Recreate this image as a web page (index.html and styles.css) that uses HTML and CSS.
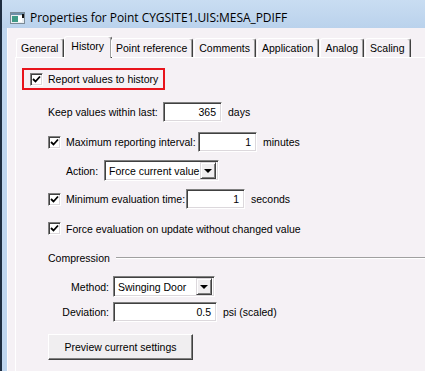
FILE: index.html
```html
<!DOCTYPE html>
<html lang="en">
<head>
  <meta charset="UTF-8" />
  <title>Properties for Point</title>
  <link rel="stylesheet" href="styles.css">
</head>
<body>

  <div class="window">
    <div class="titlebar">
      <svg class="app-icon" width="15" height="12" viewBox="0 0 15 12">
        <rect x="0.5" y="0.5" width="14" height="11" fill="#e8eef2" stroke="#7a8a96"/>
        <rect x="1" y="1" width="13" height="2" fill="#6f8fa8"/>
        <rect x="2" y="4" width="6" height="6" fill="#3f9a86"/>
        <rect x="8" y="4" width="4" height="6" fill="#ffffff"/>
        <rect x="12" y="2" width="2" height="4" fill="#111"/>
      </svg>
      <span class="title">Properties for Point CYGSITE1.UIS:MESA_PDIFF</span>
    </div>

    <div class="frame">
      <div class="client">

        <div class="tabs">
          <div class="tab">General</div>
          <div class="tab active">History</div>
          <div class="tab">Point reference</div>
          <div class="tab">Comments</div>
          <div class="tab">Application</div>
          <div class="tab">Analog</div>
          <div class="tab">Scaling</div>
        </div>

        <div class="panel">
          <div class="report-box">
            <span class="check"><svg width="9" height="9" viewBox="0 0 9 9"><path d="M1 4 L3.5 6.5 L8 1.5" fill="none" stroke="#000" stroke-width="1.8"/></svg></span>
            <span>Report values to history</span>
          </div>

          <div class="fields">
            <div class="row row-keep">
              <span class="lbl lbl-keep">Keep values within last:</span>
              <div class="edit edit-short">365</div>
              <span class="unit">days</span>
            </div>

            <div class="row row-max">
              <span class="check"><svg width="9" height="9" viewBox="0 0 9 9"><path d="M1 4 L3.5 6.5 L8 1.5" fill="none" stroke="#000" stroke-width="1.8"/></svg></span>
              <span class="lbl lbl-max">Maximum reporting interval:</span>
              <div class="edit edit-short">1</div>
              <span class="unit">minutes</span>
            </div>

            <div class="row row-action">
              <span class="lbl lbl-action">Action:</span>
              <div class="combo combo-action">
                <span class="combo-text">Force current value</span>
                <span class="drop"><i></i></span>
              </div>
            </div>

            <div class="row row-min">
              <span class="check"><svg width="9" height="9" viewBox="0 0 9 9"><path d="M1 4 L3.5 6.5 L8 1.5" fill="none" stroke="#000" stroke-width="1.8"/></svg></span>
              <span class="lbl lbl-min">Minimum evaluation time:</span>
              <div class="edit edit-short">1</div>
              <span class="unit">seconds</span>
            </div>

            <div class="row row-force">
              <span class="check"><svg width="9" height="9" viewBox="0 0 9 9"><path d="M1 4 L3.5 6.5 L8 1.5" fill="none" stroke="#000" stroke-width="1.8"/></svg></span>
              <span class="lbl">Force evaluation on update without changed value</span>
            </div>

            <div class="row row-comp">
              <span>Compression</span>
              <div class="sep"></div>
            </div>

            <div class="row row-method">
              <span class="lbl lbl-right">Method:</span>
              <div class="combo combo-method">
                <span class="combo-text">Swinging Door</span>
                <span class="drop"><i></i></span>
              </div>
            </div>

            <div class="row row-dev">
              <span class="lbl lbl-right">Deviation:</span>
              <div class="edit edit-long">0.5</div>
              <span class="unit">psi (scaled)</span>
            </div>

            <button class="btn">Preview current settings</button>
          </div>
        </div>

      </div>
    </div>
  </div>

</body>
</html>
```

FILE: styles.css
```css
* {
  box-sizing: border-box;
}
body {
  margin: 0;
  width: 425px;
  height: 371px;
  overflow: hidden;
  font-family: "Liberation Sans", Arial, sans-serif;
  font-size: 10.5px;
  color: #000;
  background: #f5f1f5;
}
.window {
  height: 371px;
  border-left: 2px solid #1d2d40;
  background: #bed5ee;
}
.titlebar {
  height: 28px;
  display: flex;
  align-items: center;
  padding-left: 8px;
  padding-top: 7px;
  background: linear-gradient(#c9ddf2, #bad2ec);
}
.app-icon {
  margin-right: 5px;
}
.title {
  font-family: "Open Sans", "Noto Sans", sans-serif;
  font-size: 12px;
  letter-spacing: -0.05px;
}
.frame {
  height: 343px;
  padding-left: 5px;
}
.client {
  height: 100%;
  border-left: 1px solid #fbfbfd;
  background: #f5f1f5;
  padding-left: 7px;
  padding-top: 8px;
}

/* tabs */
.tabs {
  display: flex;
  height: 21px;
  padding-left: 1px;
  position: relative;
  z-index: 1;
}
.tab {
  margin-top: 2px;
  height: 19px;
  padding: 3px 5px 0 4px;
  border-top: 1px solid #fff;
  border-left: 1px solid #fff;
  border-right: 1px solid #404040;
  box-shadow: inset -1px 0 #a0a0a0;
  border-radius: 3px 3px 0 0;
  margin-right: 1px;
  white-space: nowrap;
}
.tab.active {
  margin-top: 0;
  height: 22px;
  margin-left: -1px;
  margin-right: -1px;
  padding: 3px 7px 0 6px;
  background: #f5f1f5;
}

/* page */
.panel {
  width: 420px;
  height: 320px;
  border-top: 1px solid #fff;
  border-left: 1px solid #fff;
  padding-left: 6px;
  padding-top: 10px;
}
.report-box {
  display: inline-flex;
  align-items: center;
  height: 22px;
  border: 2px solid #e8141c;
  padding: 0 5px 0 6px;
}
.check {
  display: inline-flex;
  align-items: center;
  justify-content: center;
  width: 13px;
  height: 13px;
  margin-right: 5px;
  border: 1px solid;
  border-color: #808080 #fff #fff #808080;
  box-shadow: inset 1px 1px #404040, inset -1px -1px #dcd8dc;
  background: #fff;
  flex: none;
}
.fields {
  padding-left: 26px;
}
.row {
  display: flex;
  align-items: center;
}
.lbl {
  white-space: nowrap;
}
.lbl-keep { width: 115px; }
.lbl-max { width: 132px; }
.lbl-action { width: 38px; margin-left: 18px; }
.lbl-min { width: 120px; }
.lbl-right {
  width: 65px;
  text-align: right;
  padding-right: 4px;
}
.row-keep { margin-top: 12px; }
.row-max { margin-top: 10px; }
.row-action { margin-top: 8px; }
.row-min { margin-top: 8px; }
.row-force { margin-top: 13px; }
.row-comp { margin-top: 16px; height: 13px; }
.row-method { margin-top: 12px; }
.row-dev { margin-top: 5px; }

.edit {
  height: 20px;
  padding: 0 5px 0 4px;
  display: flex;
  align-items: center;
  justify-content: flex-end;
  border: 1px solid;
  border-color: #808080 #fff #fff #808080;
  box-shadow: inset 1px 1px #404040, inset -1px -1px #dcd8dc;
  background: #fff;
}
.edit-short { width: 59px; }
.edit-long { width: 104px; }
.unit {
  margin-left: 6px;
}

.combo {
  height: 21px;
  display: flex;
  align-items: center;
  border: 1px solid;
  border-color: #808080 #fff #fff #808080;
  box-shadow: inset 1px 1px #404040, inset -1px -1px #dcd8dc;
  background: #fff;
  padding: 2px;
}
.combo-action { width: 115px; }
.combo-method { width: 102px; }
.combo-text {
  flex: 1;
  padding-left: 2px;
  white-space: nowrap;
  overflow: hidden;
}
.drop {
  width: 16px;
  height: 17px;
  display: flex;
  align-items: center;
  justify-content: center;
  background: #f0eef0;
  border: 1px solid;
  border-color: #dcd8dc #404040 #404040 #dcd8dc;
  box-shadow: inset 1px 1px #fff, inset -1px -1px #808080;
}
.drop i {
  width: 0;
  height: 0;
  border-left: 4px solid transparent;
  border-right: 4px solid transparent;
  border-top: 4px solid #000;
  margin-top: 1px;
}

.sep {
  flex: 1;
  margin-left: 6px;
  border-top: 1px solid #a0a0a0;
  border-bottom: 1px solid #fff;
}

.btn {
  display: block;
  margin-top: 12px;
  width: 145px;
  height: 26px;
  font: inherit;
  color: #000;
  background: #f0eef0;
  border: 1px solid;
  border-color: #fff #404040 #404040 #fff;
  box-shadow: inset -1px -1px #808080;
  padding: 0;
}
```
